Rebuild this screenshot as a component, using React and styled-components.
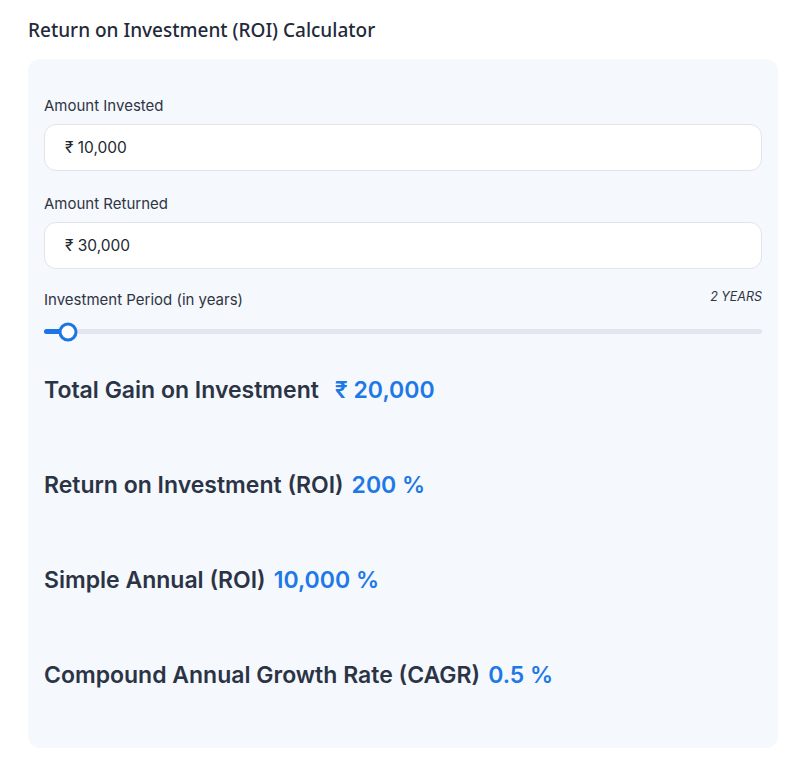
import styled, { createGlobalStyle } from "styled-components";

const GlobalStyle = createGlobalStyle`
    body{
        margin:0;
        background:#FFFFFF;
        font-family:"Inter", "Liberation Sans", sans-serif;
    }
`

const results = [
    { label: "Total Gain on Investment", value: "₹ 20,000", wide: true },
    { label: "Return on Investment (ROI)", value: "200 %" },
    { label: "Simple Annual (ROI)", value: "10,000 %" },
    { label: "Compound Annual Growth Rate (CAGR)", value: "0.5 %" },
];

function App(){
    const years = 2;
    const fill = 24;
    return (
        <Page>
            <GlobalStyle/>
            <Title>Return on Investment (ROI) Calculator</Title>
            <Card>
                <Field>
                    <Label>Amount Invested</Label>
                    <Input type="text" defaultValue="₹ 10,000"/>
                </Field>
                <Field>
                    <Label>Amount Returned</Label>
                    <Input type="text" defaultValue="₹ 30,000"/>
                </Field>
                <SliderBlock>
                    <SliderHead>
                        <Label>Investment Period (in years)</Label>
                        <Years>{years} YEARS</Years>
                    </SliderHead>
                    <Track>
                        <Fill style={{ width: fill + "px" }}/>
                        <Thumb style={{ left: fill + "px" }}/>
                    </Track>
                </SliderBlock>
                <Results>
                    {results.map(r => (
                        <Result key={r.label}>
                            {r.label}<Value $wide={r.wide}>{r.value}</Value>
                        </Result>
                    ))}
                </Results>
            </Card>
        </Page>
    )
}

export default App;

const Page = styled.div`
    padding:16px 22px 16px 28px;
`
const Title = styled.h1`
    margin:0;
    font-family:"Noto Sans", sans-serif;
    font-size:19px;
    font-weight:500;
    line-height:28px;
    color:#1f2a3a;
`
const Card = styled.div`
    margin-top:15px;
    background:#F5F8FD;
    border-radius:12px;
    padding:37px 16px 58px 16px;
    display:flex;
    flex-direction:column;
`
const Field = styled.div`
    display:flex;
    flex-direction:column;
    gap:8px;
    margin-bottom:23px;
`
const Label = styled.label`
    font-size:15px;
    line-height:20px;
    color:#2f3542;
    font-weight:400;
`
const Input = styled.input`
    height:47px;
    box-sizing:border-box;
    border:1px solid #E1E4EA;
    border-radius:12px;
    background:#FFFFFF;
    padding:0 20px;
    font-family:"Inter", sans-serif;
    font-size:15.5px;
    color:#222831;
    outline:none;
`
const SliderBlock = styled.div`
    display:flex;
    flex-direction:column;
    margin-top:-2px;
`
const SliderHead = styled.div`
    display:flex;
    justify-content:space-between;
    align-items:flex-start;
`
const Years = styled.span`
    font-size:12.5px;
    font-style:italic;
    color:#2f3542;
    margin-top:-1px;
`
const Track = styled.div`
    position:relative;
    height:5px;
    margin-top:19px;
    border-radius:3px;
    background:#E2E6EE;
`
const Fill = styled.div`
    height:100%;
    border-radius:3px;
    background:#1D74E5;
`
const Thumb = styled.div`
    position:absolute;
    top:50%;
    width:19px;
    height:19px;
    box-sizing:border-box;
    border:3.5px solid #1D74E5;
    border-radius:50%;
    background:#FFFFFF;
    transform:translate(-50%, -50%);
`
const Results = styled.div`
    display:flex;
    flex-direction:column;
    gap:65px;
    margin-top:41px;
`
const Result = styled.div`
    font-size:23px;
    line-height:30px;
    font-weight:600;
    color:#2b3445;
`
const Value = styled.span`
    color:#1E78E6;
    margin-left:${p => p.$wide ? "16px" : "8px"};
`
